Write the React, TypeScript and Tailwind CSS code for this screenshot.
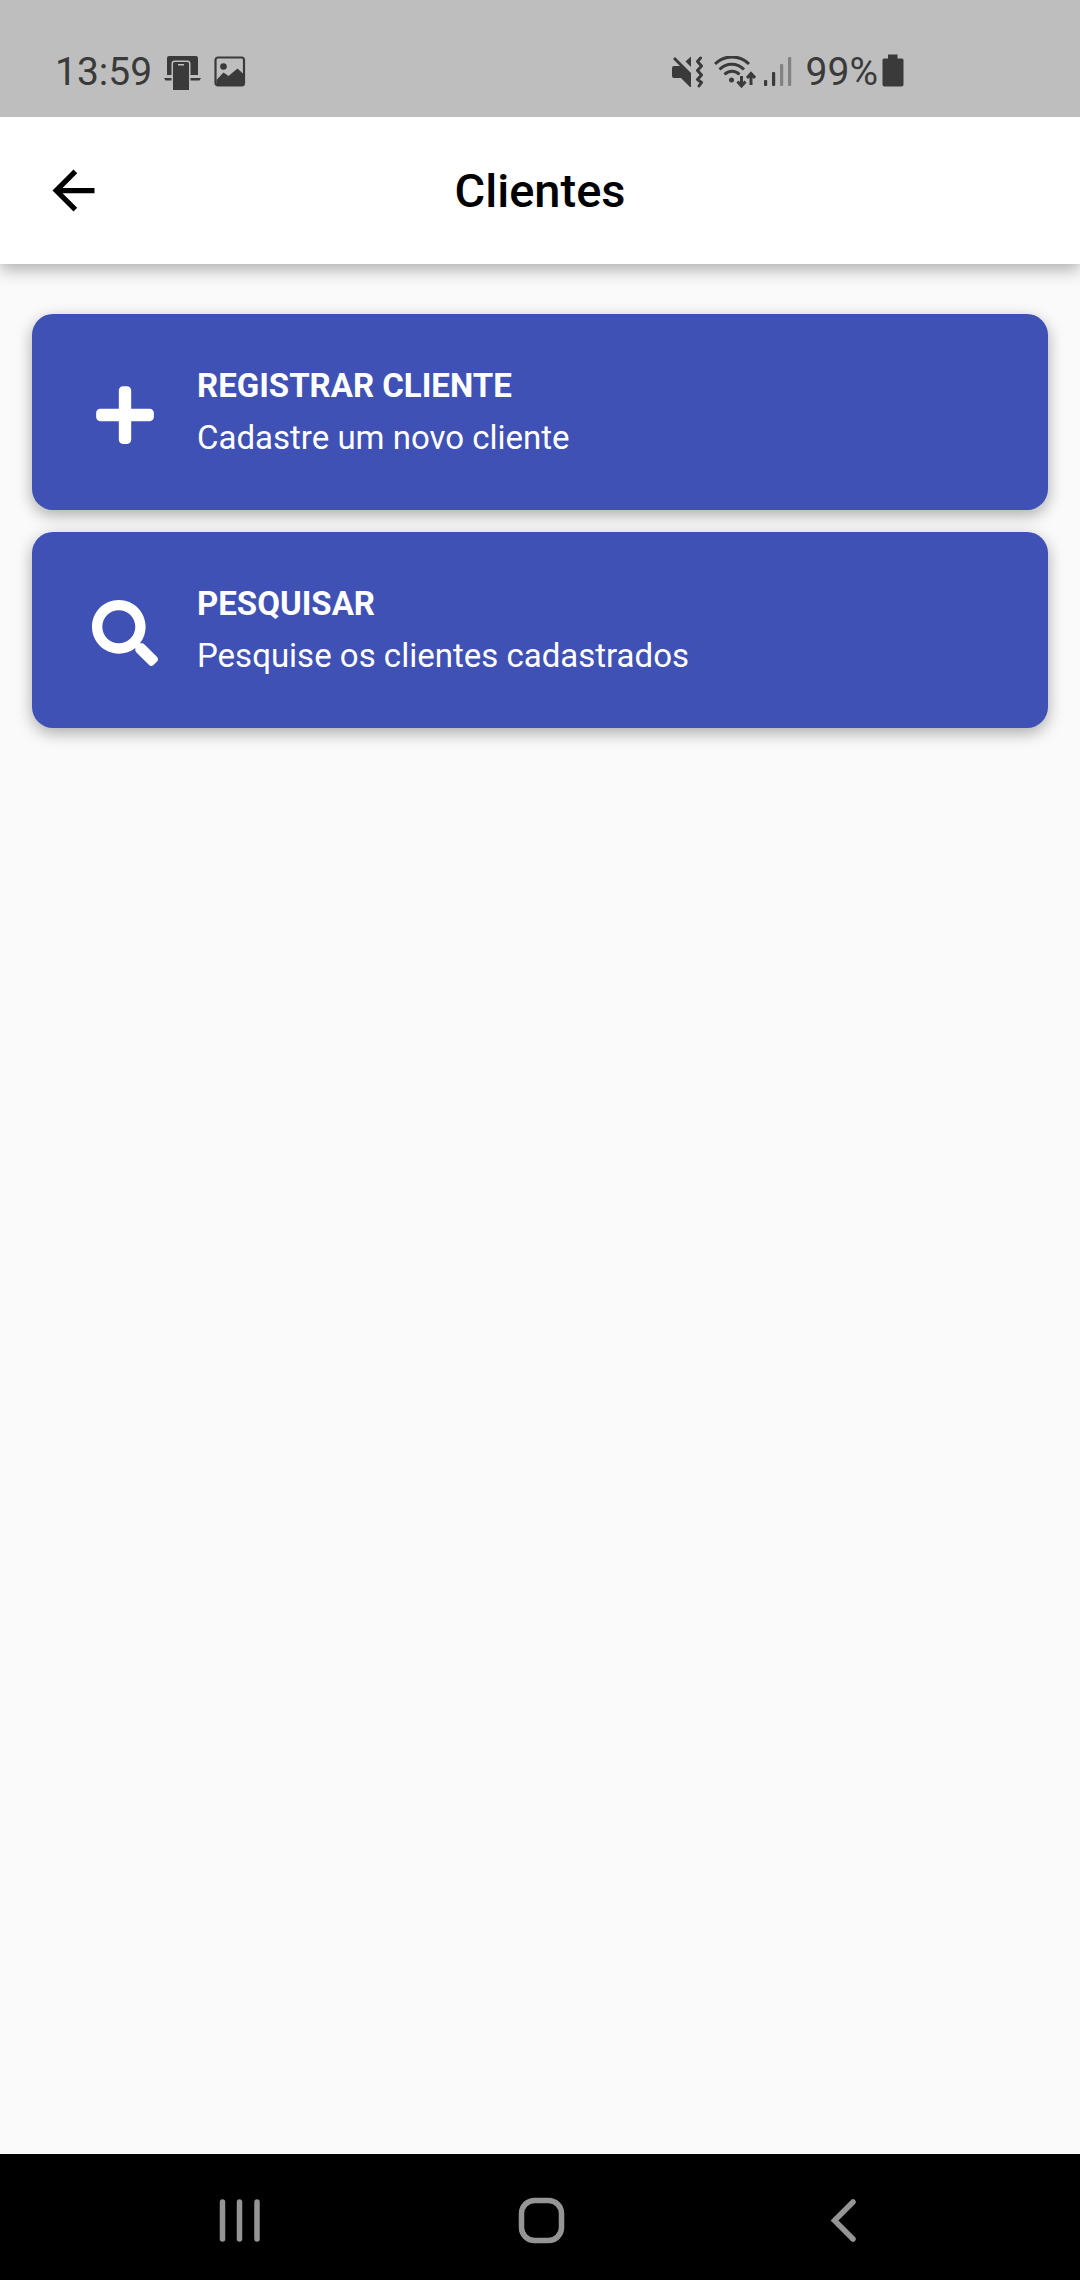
import type { ReactNode } from "react";
import { FaPlus, FaSearch } from "react-icons/fa";
import { MdArrowBack } from "react-icons/md";

function StatusBar() {
    return (
        <div className="relative z-10 flex h-[117px] items-end justify-between bg-[#bebebe] pb-6 pl-[55px] pr-44 text-[39px] leading-[42px] text-[#3a3a3a]">
            <div className="flex items-center">
                <span>13:59</span>
                {/* phone on a stand */}
                <svg className="ml-3 h-9 w-[38px]" viewBox="0 0 38 36" fill="currentColor">
                    <path d="M3 21V4a2 2 0 0 1 2-2h27a2 2 0 0 1 2 2v17h-7.500V9.500a3 3 0 0 0-3-3h-13a3 3 0 0 0-3 3V21z" />
                    <path d="M0 24h7.500v2.500H1.500z M26.500 24H37l-1.500 2.500h-9z" />
                    <path fillRule="evenodd" d="M10.500 8h13a1.500 1.500 0 0 1 1.500 1.500V36H9V9.500A1.500 1.500 0 0 1 10.500 8z M14 10v1.500h6V10z" />
                </svg>
                <svg className="ml-3 h-8 w-8" viewBox="0 0 32 32">
                    <rect x="1.500" y="1.500" width="28.500" height="28" rx="2.500" fill="none" stroke="currentColor" strokeWidth="2.200" />
                    <circle cx="9.500" cy="10.500" r="3.300" fill="currentColor" />
                    <path d="M2.500 24l7-7.500 5 3.500 9-7.500 6.500 6v10.500H2.500z" fill="currentColor" />
                </svg>
            </div>
            <div className="flex items-center">
                {/* muted, vibrating */}
                <svg className="h-8 w-8" viewBox="0 0 32 32" fill="currentColor">
                    <path d="M2 10h6L1 3l2-2 16 16v14h-1l-9-9H2a2 2 0 0 1-2-2v-8a2 2 0 0 1 2-2z" />
                    <path d="M19 .500V11l-5.500-5.500z" />
                    <path d="M28.500 2l-3 3.500 4 4.500-4 4.500 4 4.500-4 4.500 4 3-2.500 3.500" fill="none" stroke="currentColor" strokeWidth="3" strokeLinejoin="round" strokeLinecap="round" />
                </svg>
                <svg className="ml-2.5 h-8 w-[42px]" viewBox="0 0 42 32" fill="none" stroke="currentColor" strokeWidth="3">
                    <path d="M1 8a24 24 0 0 1 34 0M5.500 13.500a17 17 0 0 1 24.500 0M10.500 18.500a10.500 10.500 0 0 1 15 0" />
                    <circle cx="17.500" cy="24" r="2.500" fill="currentColor" stroke="none" />
                    <path d="M27.500 20v9M23.500 25.500l4 4.500 4-4.500M37 29v-10.500M33 22l4-4.500 4 4.500" />
                </svg>
                <svg className="ml-2 h-8 w-7" viewBox="0 0 28 32" fill="currentColor">
                    <rect y="24" width="3.200" height="6" rx="1" />
                    <rect x="8" y="16" width="3.200" height="14" rx="1" />
                    <rect x="16" y="8" width="3.200" height="22" rx="1" opacity=".45" />
                    <rect x="24" y="1" width="3.200" height="29" rx="1" opacity=".45" />
                </svg>
                <span className="ml-3.5">99%</span>
                <svg className="ml-1 h-9 w-[22px]" viewBox="0 0 22 36" fill="currentColor">
                    <path d="M6 .500h9.500v4H20a1.500 1.500 0 0 1 1.500 1.500v24.500a2 2 0 0 1-2 2h-17a2 2 0 0 1-2-2V6A1.500 1.500 0 0 1 2 4.500h4z" />
                </svg>
            </div>
        </div>
    );
}

function MenuCard({ icon, title, text }: { icon: ReactNode; title: string; text: string }) {
    return (
        <button
            type="button"
            className="flex w-full items-center gap-[39px] rounded-[21px] bg-[#3f51b5] px-[60px] py-[46px] text-left text-[33px] leading-[52px] text-white shadow-[0_5px_16px_rgba(0,0,0,0.32)]"
        >
            <span className="mt-1.5 flex w-[66px] shrink-0 justify-center">{icon}</span>
            <span>
                <span className="block font-bold">{title}</span>
                <span className="block">{text}</span>
            </span>
        </button>
    );
}

function NavButton({ label, children }: { label: string; children: ReactNode }) {
    return (
        <button type="button" aria-label={label} className="flex w-[302px] justify-center">
            <svg className="h-12 w-12" viewBox="0 0 48 48" fill="none" stroke="#959595" strokeWidth="5.500" strokeLinecap="round">
                {children}
            </svg>
        </button>
    );
}

export default function App() {
    return (
        <div className="flex min-h-screen flex-col bg-[#fafafa] font-[Roboto,sans-serif]">
            <StatusBar />

            {/* Header */}
            <header className="flex h-[147px] items-center bg-white px-[42px] text-black shadow-[0_5px_16px_rgba(0,0,0,0.32)]">
                <button type="button" aria-label="Voltar">
                    <MdArrowBack className="size-[63px]" />
                </button>
                <h1 className="flex-1 text-center text-[47px] leading-[56px] font-medium">Clientes</h1>
                <div className="w-[63px]" />
            </header>

            {/* Menu */}
            <main className="flex flex-1 flex-col gap-[22px] px-8 pt-[50px]">
                <MenuCard icon={<FaPlus className="h-[66px] w-[58px]" />} title="REGISTRAR CLIENTE" text="Cadastre um novo cliente" />
                <MenuCard icon={<FaSearch className="size-[66px]" />} title="PESQUISAR" text="Pesquise os clientes cadastrados" />
            </main>

            {/* Android navigation */}
            <nav className="flex h-[126px] items-center justify-center bg-black pt-2 pl-1">
                <NavButton label="Recentes">
                    <path d="M6.500 5v37M23.500 5v37M41 5v37" />
                </NavButton>
                <NavButton label="Início">
                    <rect x="3.500" y="3.500" width="40" height="40" rx="13" />
                </NavButton>
                <NavButton label="Anterior">
                    <path d="M33 5L14.500 23.500 33 42" />
                </NavButton>
            </nav>
        </div>
    );
}
